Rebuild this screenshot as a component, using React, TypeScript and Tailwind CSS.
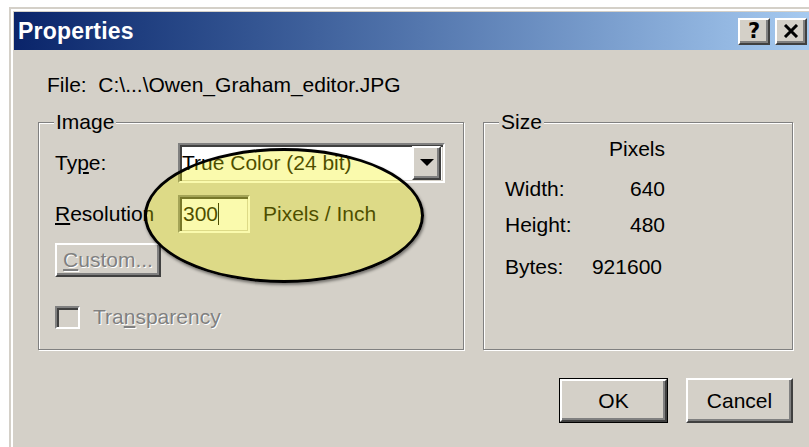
import React from "react";

const FACE = "bg-[#d4d0c8]";
const RAISED =
  "border-2 border-t-white border-l-white border-r-[#404040] border-b-[#404040] shadow-[inset_-2px_-2px_0_#808080]";
const SUNKEN =
  "border-2 border-t-[#808080] border-l-[#808080] border-r-white border-b-white shadow-[inset_2px_2px_0_#404040,inset_-1px_-1px_0_#d4d0c8]";
const DISABLED = "text-[#808080] [text-shadow:1px_1px_0_#ffffff]";

export default function App() {
  return (
    <div className="relative w-[809px] h-[447px] overflow-hidden bg-white text-black font-['Liberation_Sans',Arial,sans-serif] text-[21px] leading-[24px]">
      <div className="ml-[9px] mt-[7px] h-[440px] border-l-2 border-t-2 border-[#d4d0c8]">
        <div className="h-full border-l-2 border-t-2 border-white">
          <div className={`h-full pl-px pt-px ${FACE}`}>
            <TitleBar />
            <div className="pl-[24px] pt-[23px]">
              <div className="pl-[9px]">File:&nbsp; C:\...\Owen_Graham_editor.JPG</div>
              <div className="mt-[25px] flex gap-[19px]">
                <ImageGroup />
                <SizeGroup />
              </div>
              <div className="w-[755px] mt-[28px] flex justify-end gap-[18px]">
                <div className="border border-black">
                  <PushButton className="w-[107px] h-[43px]">OK</PushButton>
                </div>
                <PushButton className="w-[107px] h-[45px]">Cancel</PushButton>
              </div>
            </div>
          </div>
        </div>
      </div>

      {/* yellow highlight ring around the resolution field */}
      <div className="pointer-events-none absolute left-[144px] top-[148px] w-[280px] h-[135px] rounded-[50%] border-[3px] border-black bg-[rgba(239,238,0,0.32)] shadow-[1px_2px_3px_rgba(0,0,0,0.45)]" />
    </div>
  );
}

function TitleBar() {
  return (
    <div className="h-[38px] flex items-center justify-between pl-[4px] pr-[2px] bg-gradient-to-r from-[#0a246a] to-[#a6caf0]">
      <span className="text-white font-bold text-[23px] leading-[26px] tracking-[0.2px]">Properties</span>
      <div className="flex gap-[5px]">
        <CaptionButton>
          <span className="font-bold text-[21px] leading-none font-['DejaVu_Sans',sans-serif]">?</span>
        </CaptionButton>
        <CaptionButton>
          <svg width="16" height="14" viewBox="0 0 16 14">
            <path d="M2 1 L14 13 M14 1 L2 13" stroke="#000" strokeWidth="3" />
          </svg>
        </CaptionButton>
      </div>
    </div>
  );
}

function CaptionButton({ children }: { children: React.ReactNode }) {
  return (
    <div className={`w-[32px] h-[27px] flex items-center justify-center ${FACE} ${RAISED}`}>
      {children}
    </div>
  );
}

function PushButton({ className = "", children }: { className?: string; children: React.ReactNode }) {
  return (
    <div className={`flex items-center justify-center ${FACE} ${RAISED} ${className}`}>{children}</div>
  );
}

function GroupBox({ label, className, children }: { label: string; className: string; children: React.ReactNode }) {
  return (
    <div className={`relative border border-[#808080] shadow-[inset_1px_1px_0_#ffffff,1px_1px_0_#ffffff] ${className}`}>
      <span className={`absolute left-[15px] top-[-13px] px-[2px] ${FACE}`}>{label}</span>
      {children}
    </div>
  );
}

function ImageGroup() {
  return (
    <GroupBox label="Image" className="w-[426px] h-[228px] pl-[16px] pt-[20px]">
      <div className="flex items-center">
        <span className="w-[123px]">
          Ty<u className="underline-offset-2">p</u>e:
        </span>
        <div className={`w-[267px] h-[40px] flex items-center bg-white ${SUNKEN}`}>
          <span className="flex-1 pl-[2px] whitespace-nowrap">True Color (24 bit)</span>
          <div className={`w-[29px] h-[34px] mr-[2px] flex items-center justify-center ${FACE} ${RAISED}`}>
            <svg width="14" height="8" viewBox="0 0 14 8">
              <path d="M0 0 H14 L7 7 Z" fill="#000" />
            </svg>
          </div>
        </div>
      </div>

      <div className="mt-[12px] flex items-center">
        <span className="w-[123px]">
          <u className="underline-offset-2">R</u>esolution
        </span>
        <div className={`w-[72px] h-[38px] flex items-center bg-white ${SUNKEN}`}>
          <span className="pl-[3px]">300</span>
          <span className="w-px h-[22px] bg-black" />
        </div>
        <span className="ml-[13px]">Pixels / Inch</span>
      </div>

      <PushButton className={`mt-[10px] w-[106px] h-[34px] ${DISABLED}`}>
        <span>
          <u className="underline-offset-2">C</u>ustom...
        </span>
      </PushButton>

      <div className="mt-[28px] flex items-center gap-[13px]">
        <div className={`w-[25px] h-[23px] ${FACE} ${SUNKEN}`} />
        <span className={DISABLED}>
          Tra<u className="underline-offset-2">n</u>sparency
        </span>
      </div>
    </GroupBox>
  );
}

function SizeGroup() {
  return (
    <GroupBox label="Size" className="w-[310px] h-[228px] pl-[21px] pt-[14px]">
      <div className="grid grid-cols-[80px_80px]">
        <span />
        <span className="text-right">Pixels</span>
      </div>
      <div className="mt-[16px] grid grid-cols-[80px_80px]">
        <span>Width:</span>
        <span className="text-right">640</span>
      </div>
      <div className="mt-[12px] grid grid-cols-[80px_80px]">
        <span>Height:</span>
        <span className="text-right">480</span>
      </div>
      <div className="mt-[18px] grid grid-cols-[80px_80px]">
        <span>Bytes:</span>
        <span className="text-right pr-[3px]">921600</span>
      </div>
    </GroupBox>
  );
}
